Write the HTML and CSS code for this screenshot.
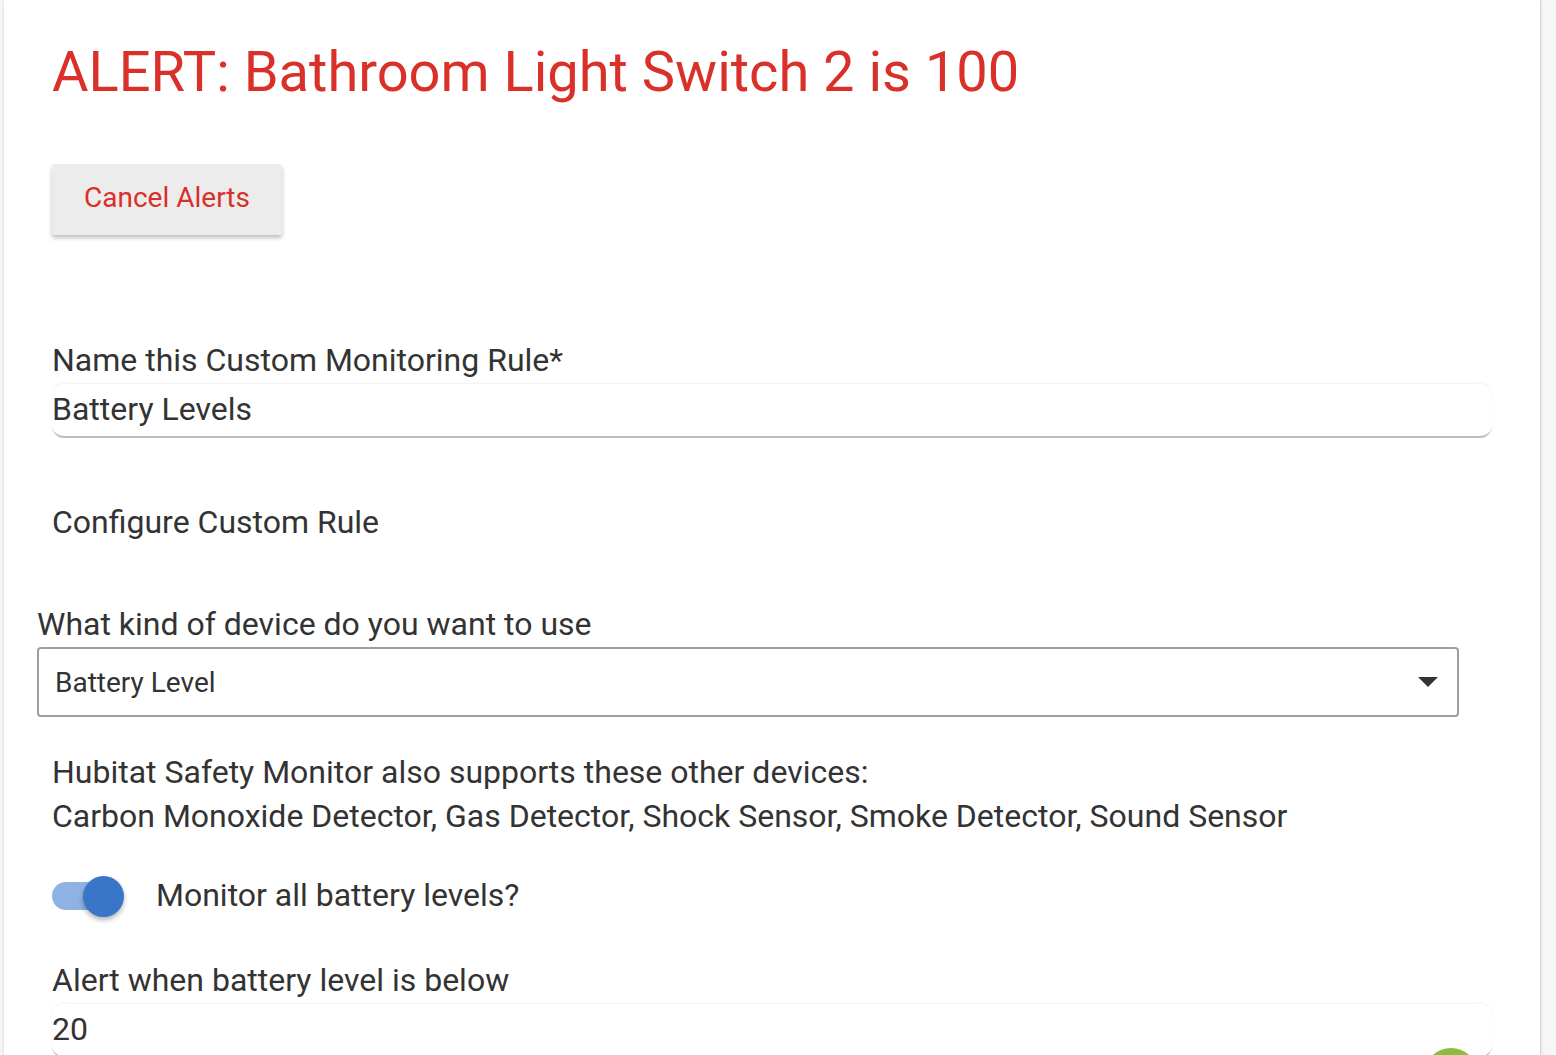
FILE: index.html
```html
<!DOCTYPE html>
<html lang="en">
<head>
    <meta charset="UTF-8">
    <meta name="viewport" content="width=device-width, initial-scale=1.0">
    <title>Custom Monitoring Rule</title>
    <link rel="stylesheet" href="styles.css">
</head>
<body>
    <div class="page">
        <h1 class="alert-title">ALERT: Bathroom Light Switch 2 is 100</h1>

        <button class="cancel-button">Cancel Alerts</button>

        <div class="field name-field">
            <label class="field-label">Name this Custom Monitoring Rule*</label>
            <div class="text-input">Battery Levels</div>
        </div>

        <h2 class="section-title">Configure Custom Rule</h2>

        <div class="device-field">
            <label class="field-label">What kind of device do you want to use</label>
            <div class="select-box">
                <span>Battery Level</span>
                <svg class="select-arrow" width="22" height="12" viewBox="0 0 22 12">
                    <path d="M1 1 H21 L11 11 Z" fill="#333"/>
                </svg>
            </div>
        </div>

        <p class="supports-note">
            Hubitat Safety Monitor also supports these other devices:<br>
            Carbon Monoxide Detector, Gas Detector, Shock Sensor, Smoke Detector, Sound Sensor
        </p>

        <div class="toggle-row">
            <div class="toggle">
                <span class="toggle-track"></span>
                <span class="toggle-knob"></span>
            </div>
            <span class="toggle-label">Monitor all battery levels?</span>
        </div>

        <div class="field level-field">
            <label class="field-label">Alert when battery level is below</label>
            <div class="text-input">20</div>
        </div>

        <div class="fab"></div>
    </div>
</body>
</html>
```

FILE: styles.css
```css
* {
    margin: 0;
    padding: 0;
    box-sizing: border-box;
}

body {
    font-family: Roboto, 'Noto Sans', sans-serif;
    background: #f6f6f6;
    color: #333;
    height: 1055px;
    overflow: hidden;
}

.page {
    position: relative;
    margin-left: 4px;
    width: 1536px;
    height: 1055px;
    background: white;
    box-shadow: 1px 0 2px rgba(0, 0, 0, 0.18), -1px 0 2px rgba(0, 0, 0, 0.08);
    padding: 40px 48px 0 48px;
}

.alert-title {
    color: #d9302a;
    font-size: 56px;
    font-weight: 400;
    line-height: 64px;
    margin-bottom: 60px;
}

.cancel-button {
    display: block;
    width: 230px;
    height: 71px;
    background: #ececec;
    color: #d9302a;
    border: none;
    border-radius: 3px;
    font-family: inherit;
    font-size: 28px;
    padding-bottom: 4px;
    box-shadow: 0 3px 4px rgba(0, 0, 0, 0.25);
    margin-bottom: 107px;
}

.field-label {
    display: block;
    font-size: 32px;
    line-height: 36px;
}

.text-input {
    font-size: 32px;
    line-height: 50px;
    height: 54px;
    border-radius: 12px;
    box-shadow: 0 -1px 2px rgba(0, 0, 0, 0.06);
    border-bottom: 2px solid #bdbdbd;
    margin-top: 6px;
}

.section-title {
    font-size: 32px;
    font-weight: 400;
    line-height: 36px;
    margin-top: 66px;
}

.device-field {
    margin: 66px 33px 0 -15px;
}

.select-box {
    display: flex;
    align-items: center;
    justify-content: space-between;
    height: 70px;
    margin-top: 5px;
    border: 2px solid #9e9e9e;
    border-radius: 4px;
    padding: 0 18px 0 16px;
    font-size: 28px;
}

.supports-note {
    font-size: 32px;
    line-height: 44px;
    margin-top: 33px;
}

.toggle-row {
    display: flex;
    align-items: center;
    gap: 32px;
    margin-top: 37px;
}

.toggle {
    position: relative;
    width: 72px;
    height: 42px;
}

.toggle-track {
    position: absolute;
    left: 0;
    top: 7px;
    width: 64px;
    height: 28px;
    border-radius: 14px;
    background: #8eb2e2;
}

.toggle-knob {
    position: absolute;
    left: 31px;
    top: 1px;
    width: 41px;
    height: 41px;
    border-radius: 50%;
    background: #3a76c8;
    box-shadow: 0 3px 5px rgba(0, 0, 0, 0.3);
}

.toggle-label {
    font-size: 32px;
    margin-bottom: 3px;
}

.level-field {
    margin-top: 45px;
}

.fab {
    position: absolute;
    left: 1420px;
    top: 1048px;
    width: 54px;
    height: 54px;
    border-radius: 50%;
    background: #8cbd3f;
}
```
